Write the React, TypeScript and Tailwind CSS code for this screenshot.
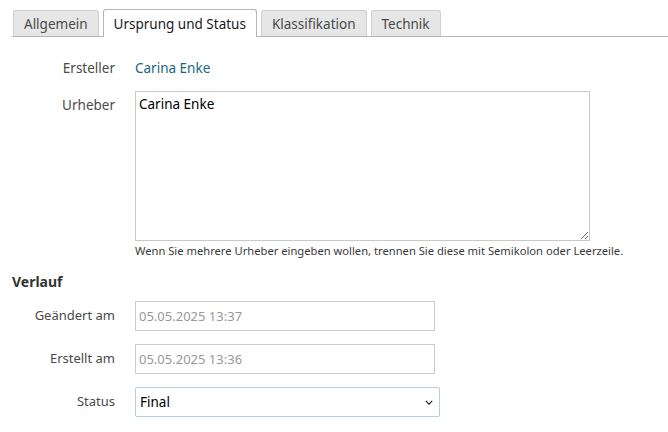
import { useState } from "react";

const tabs = ["Allgemein", "Ursprung und Status", "Klassifikation", "Technik"];

export default function App() {
  const [active, setActive] = useState(1);

  return (
    <div className="min-h-[432px] w-[668px] bg-white pl-3 pt-[9px] font-['Noto_Sans',sans-serif] text-[13px] text-[#444]">
      {/* tab strip */}
      <div className="flex items-end gap-1 border-b border-[#b5b5b5] pl-px">
        {tabs.map((tab, i) =>
          i === active ? (
            <button
              key={tab}
              onClick={() => setActive(i)}
              className="-mb-px h-[28px] rounded-t-[3px] border border-b-0 border-[#b5b5b5] bg-white px-[10px] text-[13.5px] leading-[26px] text-[#1a1a1a]"
            >
              {tab}
            </button>
          ) : (
            <button
              key={tab}
              onClick={() => setActive(i)}
              className="h-[26px] rounded-t-[3px] border border-b-0 border-[#cfcfcf] bg-[#e6e6e6] px-[10px] text-[13.5px] leading-[24px] text-[#4a4a4a]"
            >
              {tab}
            </button>
          )
        )}
      </div>

      {/* Ursprung */}
      <div className="mt-[21px] grid grid-cols-[103px_1fr] gap-x-5 text-[13.5px]">
        <div className="text-right leading-5 text-[#4a4a4a]">Ersteller</div>
        <div className="leading-5 text-[#16687f]">Carina Enke</div>

        <div className="mt-[13px] pt-[4px] text-right leading-5 text-[#4a4a4a]">Urheber</div>
        <div className="mt-[13px]">
          <textarea
            defaultValue="Carina Enke"
            className="block h-[150px] w-[455px] border border-[#c8c8c8] px-[3px] py-[2px] text-[13.5px] leading-5 text-black outline-none"
          />
          <p className="mt-[2px] whitespace-nowrap text-[11.2px] leading-4 text-[#3a3a3a]">
            Wenn Sie mehrere Urheber eingeben wollen, trennen Sie diese mit Semikolon oder Leerzeile.
          </p>
        </div>
      </div>

      {/* Verlauf */}
      <h3 className="mt-[13px] text-[14px] font-bold leading-5 text-[#333]">Verlauf</h3>

      <div className="mt-[9px] grid grid-cols-[103px_1fr] items-center gap-x-5 gap-y-[13px]">
        <div className="text-right text-[#4a4a4a]">Geändert am</div>
        <input
          readOnly
          value="05.05.2025 13:37"
          className="h-[30px] w-[300px] border border-[#cccccc] px-[3px] text-[13px] text-[#999] outline-none"
        />

        <div className="text-right text-[#4a4a4a]">Erstellt am</div>
        <input
          readOnly
          value="05.05.2025 13:36"
          className="h-[30px] w-[300px] border border-[#cccccc] px-[3px] text-[13px] text-[#999] outline-none"
        />

        <div className="text-right text-[#4a4a4a]">Status</div>
        <div className="relative w-[305px]">
          <select
            defaultValue="Final"
            className="h-[30px] w-full appearance-none rounded-[2px] border border-[#b3cde3] bg-white px-[4px] text-[13.5px] text-black outline-none"
          >
            <option>Entwurf</option>
            <option>Final</option>
          </select>
          <svg
            viewBox="0 0 10 6"
            className="pointer-events-none absolute right-[7px] top-[13px] h-[5px] w-[8px]"
            fill="none"
            stroke="#222"
            strokeWidth="1.6"
          >
            <path d="M1 1l4 4 4-4" />
          </svg>
        </div>
      </div>
    </div>
  );
}
